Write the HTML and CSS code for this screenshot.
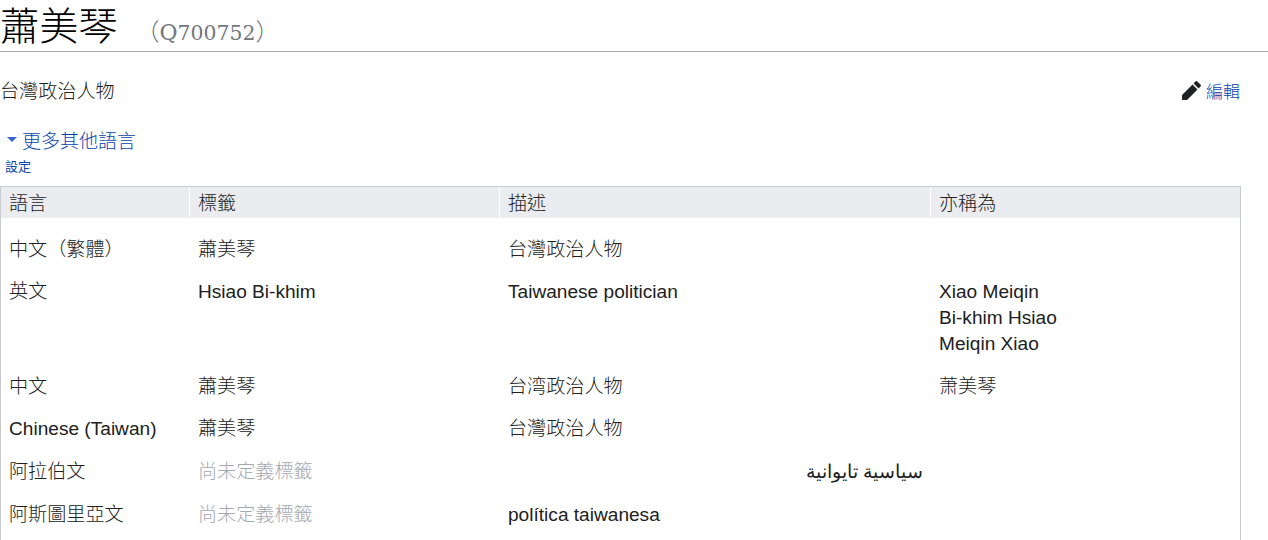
FILE: index.html
```html
<!DOCTYPE html>
<html lang="zh-Hant">
<head>
<meta charset="utf-8">
<title>蕭美琴</title>
<link rel="stylesheet" href="styles.css">
</head>
<body>
<h1 class="title"><span class="name">蕭美琴</span><span class="qid">（<span class="q">Q</span><span class="digits">700752</span>）</span></h1>
<div class="desc-row">
  <span class="desc">台灣政治人物</span>
  <a class="edit"><svg class="pencil" viewBox="0 0 20 20" width="20" height="20"><path d="M16.77 8l1.94-2a1 1 0 0 0 0-1.41l-3.34-3.3a1 1 0 0 0-1.41 0L12 3.23zM1 14.25V19h4.75l9.96-9.96-4.75-4.75z"/></svg><span>編輯</span></a>
</div>
<div class="more"><span class="arrow"></span><a>更多其他語言</a></div>
<div class="settings"><a>設定</a></div>
<table class="terms">
  <colgroup><col class="c1"><col class="c2"><col class="c3"><col class="c4"></colgroup>
  <thead>
    <tr><th>語言</th><th>標籤</th><th>描述</th><th>亦稱為</th></tr>
  </thead>
  <tbody>
    <tr class="r1"><td>中文（繁體）</td><td>蕭美琴</td><td>台灣政治人物</td><td></td></tr>
    <tr class="r2"><td>英文</td><td>Hsiao Bi-khim</td><td>Taiwanese politician</td><td><div>Xiao Meiqin</div><div>Bi-khim Hsiao</div><div>Meiqin Xiao</div></td></tr>
    <tr class="r3"><td>中文</td><td>蕭美琴</td><td>台湾政治人物</td><td>萧美琴</td></tr>
    <tr class="r4"><td>Chinese (Taiwan)</td><td>蕭美琴</td><td>台灣政治人物</td><td></td></tr>
    <tr class="r5"><td>阿拉伯文</td><td class="empty">尚未定義標籤</td><td class="rtl" dir="rtl">سياسية تايوانية</td><td></td></tr>
    <tr class="r6"><td>阿斯圖里亞文</td><td class="empty">尚未定義標籤</td><td>política taiwanesa</td><td></td></tr>
  </tbody>
</table>
</body>
</html>
```
FILE: styles.css
```css
html, body { margin: 0; padding: 0; background: #fff; overflow: hidden; }
body {
  height: 540px;
  color: #202122;
  font-family: "Liberation Sans", "Noto Sans CJK TC", sans-serif;
  font-size: 19.1px;
  font-weight: 300;
}
a { color: #0645ad; }
.title {
  margin: 0;
  height: 51px;
  border-bottom: 1px solid #a2a9b1;
  font-family: "Liberation Serif", "Noto Sans CJK TC", serif;
  font-weight: 300;
  font-size: 39.2px;
  line-height: 54px;
  color: #000;
  white-space: nowrap;
}
.qid {
  font-family: "DejaVu Serif", "Noto Sans CJK TC", serif;
  font-size: 24px;
  color: #72777d;
  margin-left: 18px;
}
.q { font-size: 22px; }
.digits { font-size: 20.4px; }
.desc-row {
  display: flex;
  justify-content: space-between;
  align-items: center;
  width: 1240px;
  height: 26px;
  margin-top: 25px;
}
.edit { display: flex; align-items: center; gap: 4px; font-size: 17px; }
.pencil { fill: #202122; width: 21px; height: 21px; }
.more {
  display: flex;
  align-items: center;
  gap: 5px;
  margin-top: 23px;
  padding-left: 7px;
  height: 26px;
  font-size: 19px;
}
.arrow {
  width: 0; height: 0;
  border-left: 5px solid transparent;
  border-right: 5px solid transparent;
  border-top: 5px solid #36c;
}
.settings { font-size: 13px; line-height: 17px; padding-left: 5px; margin-top: 6px; height: 28px; font-weight: 400; }
.terms {
  border-collapse: separate;
  border-spacing: 0;
  table-layout: fixed;
  width: 1241px;
  border: 1px solid #c8ccd1;
  border-bottom: 0;
  line-height: 26px;
}
.c1 { width: 188px; }
.c2 { width: 310px; }
.c3 { width: 431px; }
.c4 { width: 310px; }
.terms th {
  background: #eaecf0;
  height: 29px;
  padding: 2px 8px 0;
  text-align: left;
  font-weight: 300;
  border-left: 1px solid #fff;
}
.terms th:first-child { border-left: 0; }
.terms td { vertical-align: top; padding: 0 8px; }
.terms td:nth-child(n+2) { padding-left: 9px; }
.r1 td { padding-top: 19px !important; }
.r2 td { padding-top: 16px !important; }
.r3 td { padding-top: 17px !important; }
.r4 td { padding-top: 16px !important; }
.r5 td { padding-top: 17px !important; }
.r6 td { padding-top: 17px !important; padding-bottom: 30px; }
.empty { color: #a2a9b1; }
.terms td.rtl { text-align: right; padding: 0 7px; }
```
